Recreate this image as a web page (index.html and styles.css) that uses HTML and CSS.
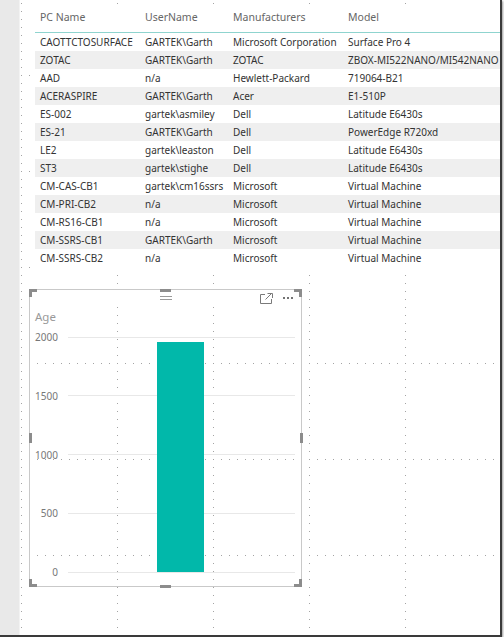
FILE: index.html
```html
<!DOCTYPE html>
<html lang="en">
<head>
    <link rel="stylesheet" href="styles.css">
    <meta charset="UTF-8">
    <title>Computers Report</title>
</head>
<body>

<div class="screen">
    <div class="rail"></div>
    <div class="canvas">

        <div class="tablevisual">
            <table>
                <colgroup>
                    <col class="c1">
                    <col class="c2">
                    <col class="c3">
                    <col class="c4">
                </colgroup>
                <tr class="head">
                    <th>PC Name</th>
                    <th>UserName</th>
                    <th>Manufacturers</th>
                    <th>Model</th>
                </tr>
                <tr><td>CAOTTCTOSURFACE</td><td>GARTEK\Garth</td><td>Microsoft Corporation</td><td>Surface Pro 4</td></tr>
                <tr><td>ZOTAC</td><td>GARTEK\Garth</td><td>ZOTAC</td><td>ZBOX-MI522NANO/MI542NANO</td></tr>
                <tr><td>AAD</td><td>n/a</td><td>Hewlett-Packard</td><td>719064-B21</td></tr>
                <tr><td>ACERASPIRE</td><td>GARTEK\Garth</td><td>Acer</td><td>E1-510P</td></tr>
                <tr><td>ES-002</td><td>gartek\asmiley</td><td>Dell</td><td>Latitude E6430s</td></tr>
                <tr><td>ES-21</td><td>GARTEK\Garth</td><td>Dell</td><td>PowerEdge R720xd</td></tr>
                <tr><td>LE2</td><td>gartek\leaston</td><td>Dell</td><td>Latitude E6430s</td></tr>
                <tr><td>ST3</td><td>gartek\stighe</td><td>Dell</td><td>Latitude E6430s</td></tr>
                <tr><td>CM-CAS-CB1</td><td>gartek\cm16ssrs</td><td>Microsoft</td><td>Virtual Machine</td></tr>
                <tr><td>CM-PRI-CB2</td><td>n/a</td><td>Microsoft</td><td>Virtual Machine</td></tr>
                <tr><td>CM-RS16-CB1</td><td>n/a</td><td>Microsoft</td><td>Virtual Machine</td></tr>
                <tr><td>CM-SSRS-CB1</td><td>GARTEK\Garth</td><td>Microsoft</td><td>Virtual Machine</td></tr>
                <tr><td>CM-SSRS-CB2</td><td>n/a</td><td>Microsoft</td><td>Virtual Machine</td></tr>
            </table>
        </div>

        <div class="chartvisual">
            <span class="grip tl"></span>
            <span class="grip tr"></span>
            <span class="grip bl"></span>
            <span class="grip br"></span>
            <span class="grip tm"></span>
            <span class="grip bm"></span>
            <span class="grip lm"></span>
            <span class="grip rm"></span>

            <div class="vhead">
                <svg class="drag" width="12" height="6" viewBox="0 0 12 6">
                    <path d="M0 1.5H12M0 4.5H12" stroke="#9a9a9a" stroke-width="1"/>
                </svg>
                <div class="vtools">
                    <svg width="14" height="11" viewBox="0 0 14 11" fill="none" stroke="#7a7a7a" stroke-width="1">
                        <path d="M6 1.5H1.5V10.5H12.5V6"/>
                        <path d="M6.5 6.5L12.5 0.5"/>
                        <path d="M8.5 0.5H13.5V5"/>
                    </svg>
                    <svg width="12" height="4" viewBox="0 0 12 4">
                        <circle cx="2" cy="2" r="1" fill="#444"/>
                        <circle cx="6" cy="2" r="1" fill="#444"/>
                        <circle cx="10" cy="2" r="1" fill="#444"/>
                    </svg>
                </div>
            </div>

            <svg class="plot" width="271" height="280" viewBox="0 0 271 280">
                <text class="axistitle" x="5" y="15">Age</text>
                <!-- gridlines -->
                <path d="M38 31.5H265M38 89.5H265M38 148.5H265M38 207.5H265M38 266.5H265" stroke="#e8e8e8" stroke-width="1"/>
                <text class="tick" x="28" y="35">2000</text>
                <text class="tick" x="28" y="94">1500</text>
                <text class="tick" x="28" y="152.5">1000</text>
                <text class="tick" x="28" y="211">500</text>
                <text class="tick" x="28" y="270">0</text>
                <!-- Age bar, value 1957 -->
                <rect x="127" y="36" width="47" height="230" fill="#01b8aa"/>
            </svg>
        </div>

    </div>
</div>

</body>
</html>
```

FILE: styles.css
```css
body {
    margin: 0;
    font-family: "Noto Sans", "Open Sans", sans-serif;
    font-size: 10px;
    color: #333;
    background: #fff;
}
.screen {
    display: flex;
    width: 500px;
    height: 635px;
    border-right: 2px solid #3a3a3a;
    border-bottom: 2px solid #3a3a3a;
    box-shadow: 1px 1px 2px rgba(0,0,0,0.4);
}
.rail {
    width: 19px;
    background: #e9e9e9;
    border-right: 1px solid #f3f3f3;
}
.canvas {
    flex: 1;
    overflow: hidden;
    background-color: #fff;
    background-image:
        conic-gradient(from 0deg at 1px 1px, transparent 75%, #a4a4a4 0),
        conic-gradient(from 0deg at 1px 1px, transparent 75%, #a4a4a4 0);
    background-size: 96px 8px, 8px 96px;
    background-position: 1px 3px, 1px 75px;
}

/* table visual */
.tablevisual {
    margin: 4px 0 0 15px;
    padding-bottom: 4px;
    background: #fff;
    overflow: hidden;
}
table {
    border-collapse: collapse;
    table-layout: fixed;
    width: 520px;
    white-space: nowrap;
}
.c1 { width: 105px; }
.c2 { width: 88px; }
.c3 { width: 115px; }
.c4 { width: 212px; }
th {
    height: 26px;
    padding: 0 0 2px 5px;
    font-weight: normal;
    font-size: 10.5px;
    text-align: left;
    color: #666;
    border-bottom: 1px solid #8fd4cf;
}
td {
    height: 18px;
    padding: 0 0 0 5px;
    overflow: hidden;
}
tr:nth-child(odd) td {
    background: #efefef;
}

/* column chart visual */
.chartvisual {
    position: relative;
    width: 271px;
    margin: 18px 0 0 9px;
    border: 1px solid #c9c9c9;
}
.vhead {
    display: grid;
    grid-template-columns: 1fr auto 1fr;
    align-items: center;
    height: 16px;
    background: #fff;
}
.drag {
    grid-column: 2;
}
.vtools {
    grid-column: 3;
    justify-self: end;
    display: flex;
    align-items: center;
    gap: 9px;
    padding-right: 7px;
}
.plot {
    display: block;
}
.axistitle {
    font-size: 11.5px;
    fill: #999;
}
.tick {
    font-size: 10px;
    fill: #777;
    text-anchor: end;
}
.grip {
    position: absolute;
    background: #8c8c8c;
}
.tl, .tr, .bl, .br {
    width: 5px;
    height: 5px;
    background: none;
    border: 0 solid #8c8c8c;
}
.tl { top: -1px; left: -1px; border-width: 3px 0 0 3px; }
.tr { top: -1px; right: -1px; border-width: 3px 3px 0 0; }
.bl { bottom: -1px; left: -1px; border-width: 0 0 3px 3px; }
.br { bottom: -1px; right: -1px; border-width: 0 3px 3px 0; }
.tm { top: -1px; left: 130px; width: 11px; height: 3px; }
.bm { bottom: -2px; left: 130px; width: 11px; height: 3px; }
.lm { left: -1px; top: 143px; width: 3px; height: 10px; }
.rm { right: -2px; top: 143px; width: 3px; height: 10px; }
```
